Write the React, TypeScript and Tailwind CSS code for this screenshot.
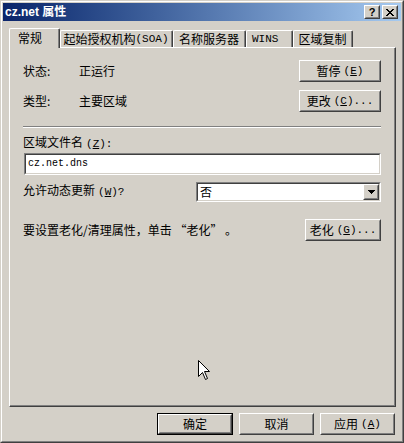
import React from "react";

type C = { children?: React.ReactNode; className?: string };

const M = ({ children, className = "" }: C) => (
  <span className={`font-['Liberation_Mono',monospace] text-[11px] ${className}`}>{children}</span>
);

function Raised({ children, className = "" }: C) {
  return (
    <div className={`border border-t-white border-l-white border-r-[#404040] border-b-[#404040] bg-[#d4d0c8] ${className}`}>
      <div className="w-full h-full border border-t-[#d4d0c8] border-l-[#d4d0c8] border-r-[#808080] border-b-[#808080] flex items-center justify-center">
        {children}
      </div>
    </div>
  );
}

function Sunken({ children, className = "" }: C) {
  return (
    <div className={`border border-t-[#808080] border-l-[#808080] border-r-white border-b-white ${className}`}>
      <div className="w-full h-full border border-t-[#404040] border-l-[#404040] border-r-[#d4d0c8] border-b-[#d4d0c8] bg-white flex items-center">
        {children}
      </div>
    </div>
  );
}

function Tab({ children, className = "", active = false, inner = "" }: C & { active?: boolean; inner?: string }) {
  return (
    <div
      className={`relative bg-[#d4d0c8] border-l border-t border-r border-l-white border-t-white border-r-[#404040] rounded-tl-[2px] rounded-tr-[2px] ${
        active ? "h-[20px] -mb-px z-10" : "h-[17px]"
      } ${className}`}
    >
      <div className={`h-full border-r border-r-[#808080] flex items-center ${inner}`}>{children}</div>
    </div>
  );
}

export default function App() {
  return (
    <div className="relative w-[404px] h-[443px] bg-[#d4d0c8] text-black text-[12px] leading-[14px] font-['Noto_Sans_CJK_SC',sans-serif]">
      <div className="w-full h-full border border-t-[#d4d0c8] border-l-[#d4d0c8] border-r-[#404040] border-b-[#404040]">
        <div className="w-full h-full border border-t-white border-l-white border-r-[#808080] border-b-[#808080] p-px flex flex-col">
          {/* Title bar */}
          <div className="h-[18px] flex items-center bg-linear-to-r from-[#0a246a] to-[#a6caf0] pl-[2px] pr-[3px]">
            <span className="text-white font-bold text-[12px] leading-none font-['Liberation_Sans','Noto_Sans_CJK_SC',sans-serif]">
              cz.net 属性
            </span>
            <div className="ml-auto flex gap-[2px]">
              <Raised className="w-[16px] h-[14px]">
                <span className="font-['Liberation_Sans',sans-serif] font-bold text-[11px] leading-none">?</span>
              </Raised>
              <Raised className="w-[16px] h-[14px]">
                <svg width="8" height="7" viewBox="0 0 8 7" shapeRendering="crispEdges">
                  <path d="M0 0h2v1h-2zM6 0h2v1h-2zM1 1h2v1h-2zM5 1h2v1h-2zM2 2h4v1h-4zM3 3h2v1h-2zM2 4h4v1h-4zM1 5h2v1h-2zM5 5h2v1h-2zM0 6h2v1h-2zM6 6h2v1h-2z" fill="#000" />
                </svg>
              </Raised>
            </div>
          </div>

          {/* Body */}
          <div className="flex-1 pl-[6px] pr-[5px] pt-[7px] flex flex-col">
            {/* Tabs */}
            <div className="h-[19px] flex items-end relative z-10">
              <Tab active className="w-[51px]" inner="justify-start pl-[8px] pb-[1px]">常规</Tab>
              <Tab className="w-[113px]" inner="justify-center">
                起始授权机构<M>(SOA)</M>
              </Tab>
              <Tab className="w-[73px]" inner="justify-center">名称服务器</Tab>
              <Tab className="w-[47px]" inner="justify-start pl-[5px]">
                <M>WINS</M>
              </Tab>
              <Tab className="w-[60px]" inner="justify-center">区域复制</Tab>
            </div>

            {/* Panel */}
            <div className="h-[360px] border border-t-white border-l-white border-r-[#404040] border-b-[#404040]">
              <div className="w-full h-full border-r border-b border-r-[#808080] border-b-[#808080] pl-[13px] pr-[13px] pt-[12px] flex flex-col">
                <div className="flex items-center h-[22px]">
                  <span className="w-[56px]">状态:</span>
                  <span>正运行</span>
                  <Raised className="ml-auto w-[82px] h-[22px]">
                    暂停<M className="ml-[3px]">(<span className="underline">E</span>)</M>
                  </Raised>
                </div>
                <div className="flex items-center h-[22px] mt-[8px]">
                  <span className="w-[56px]">类型:</span>
                  <span>主要区域</span>
                  <Raised className="ml-auto w-[82px] h-[22px]">
                    更改<M className="ml-[3px]">(<span className="underline">C</span>)...</M>
                  </Raised>
                </div>
                <div className="mt-[14px] h-[2px] border-t border-b border-t-[#808080] border-b-white" />
                <div className="mt-[7px] h-[14px]">
                  区域文件名<M className="ml-[3px]">(<span className="underline">Z</span>):</M>
                </div>
                <Sunken className="mt-[4px] ml-[1px] h-[22px]">
                  <span className="pl-[2px] font-['Liberation_Mono',monospace] text-[10px]">cz.net.dns</span>
                </Sunken>
                <div className="mt-[7px] h-[20px] flex items-start">
                  <span className="mt-px">
                    允许动态更新<M className="ml-[3px]">(<span className="underline">W</span>)?</M>
                  </span>
                  <Sunken className="ml-auto w-[185px] h-[20px]">
                    <span className="pl-[2px]">否</span>
                    <Raised className="ml-auto w-[16px] h-[16px]">
                      <svg width="7" height="4" viewBox="0 0 7 4" shapeRendering="crispEdges">
                        <path d="M0 0h7v1h-7zM1 1h5v1h-5zM2 2h3v1h-3zM3 3h1v1h-1z" fill="#000" />
                      </svg>
                    </Raised>
                  </Sunken>
                </div>
                <div className="mt-[17px] h-[22px] flex items-center">
                  <span>要设置老化/清理属性，单击 “老化” 。</span>
                  <Raised className="ml-auto w-[76px] h-[22px]">
                    老化<M className="ml-[3px]">(<span className="underline">G</span>)...</M>
                  </Raised>
                </div>
              </div>
            </div>

            {/* Bottom buttons */}
            <div className="mt-[6px] flex justify-end gap-[6px] pr-[1px]">
              <div className="w-[76px] h-[22px] border border-black">
                <Raised className="w-full h-full">确定</Raised>
              </div>
              <Raised className="w-[75px] h-[22px]">取消</Raised>
              <Raised className="w-[75px] h-[22px]">
                应用<M className="ml-[3px]">(<span className="underline">A</span>)</M>
              </Raised>
            </div>
          </div>
        </div>
      </div>

      {/* Mouse cursor */}
      <svg className="absolute left-[198px] top-[360px]" width="13" height="21" viewBox="0 0 13 21">
        <path d="M0.5 0.5V16.5L4.5 12.5L7.5 19.5L9.5 18.5L6.5 11.5H11.5Z" fill="#fff" stroke="#000" strokeWidth="1" strokeLinejoin="miter" />
      </svg>
    </div>
  );
}
